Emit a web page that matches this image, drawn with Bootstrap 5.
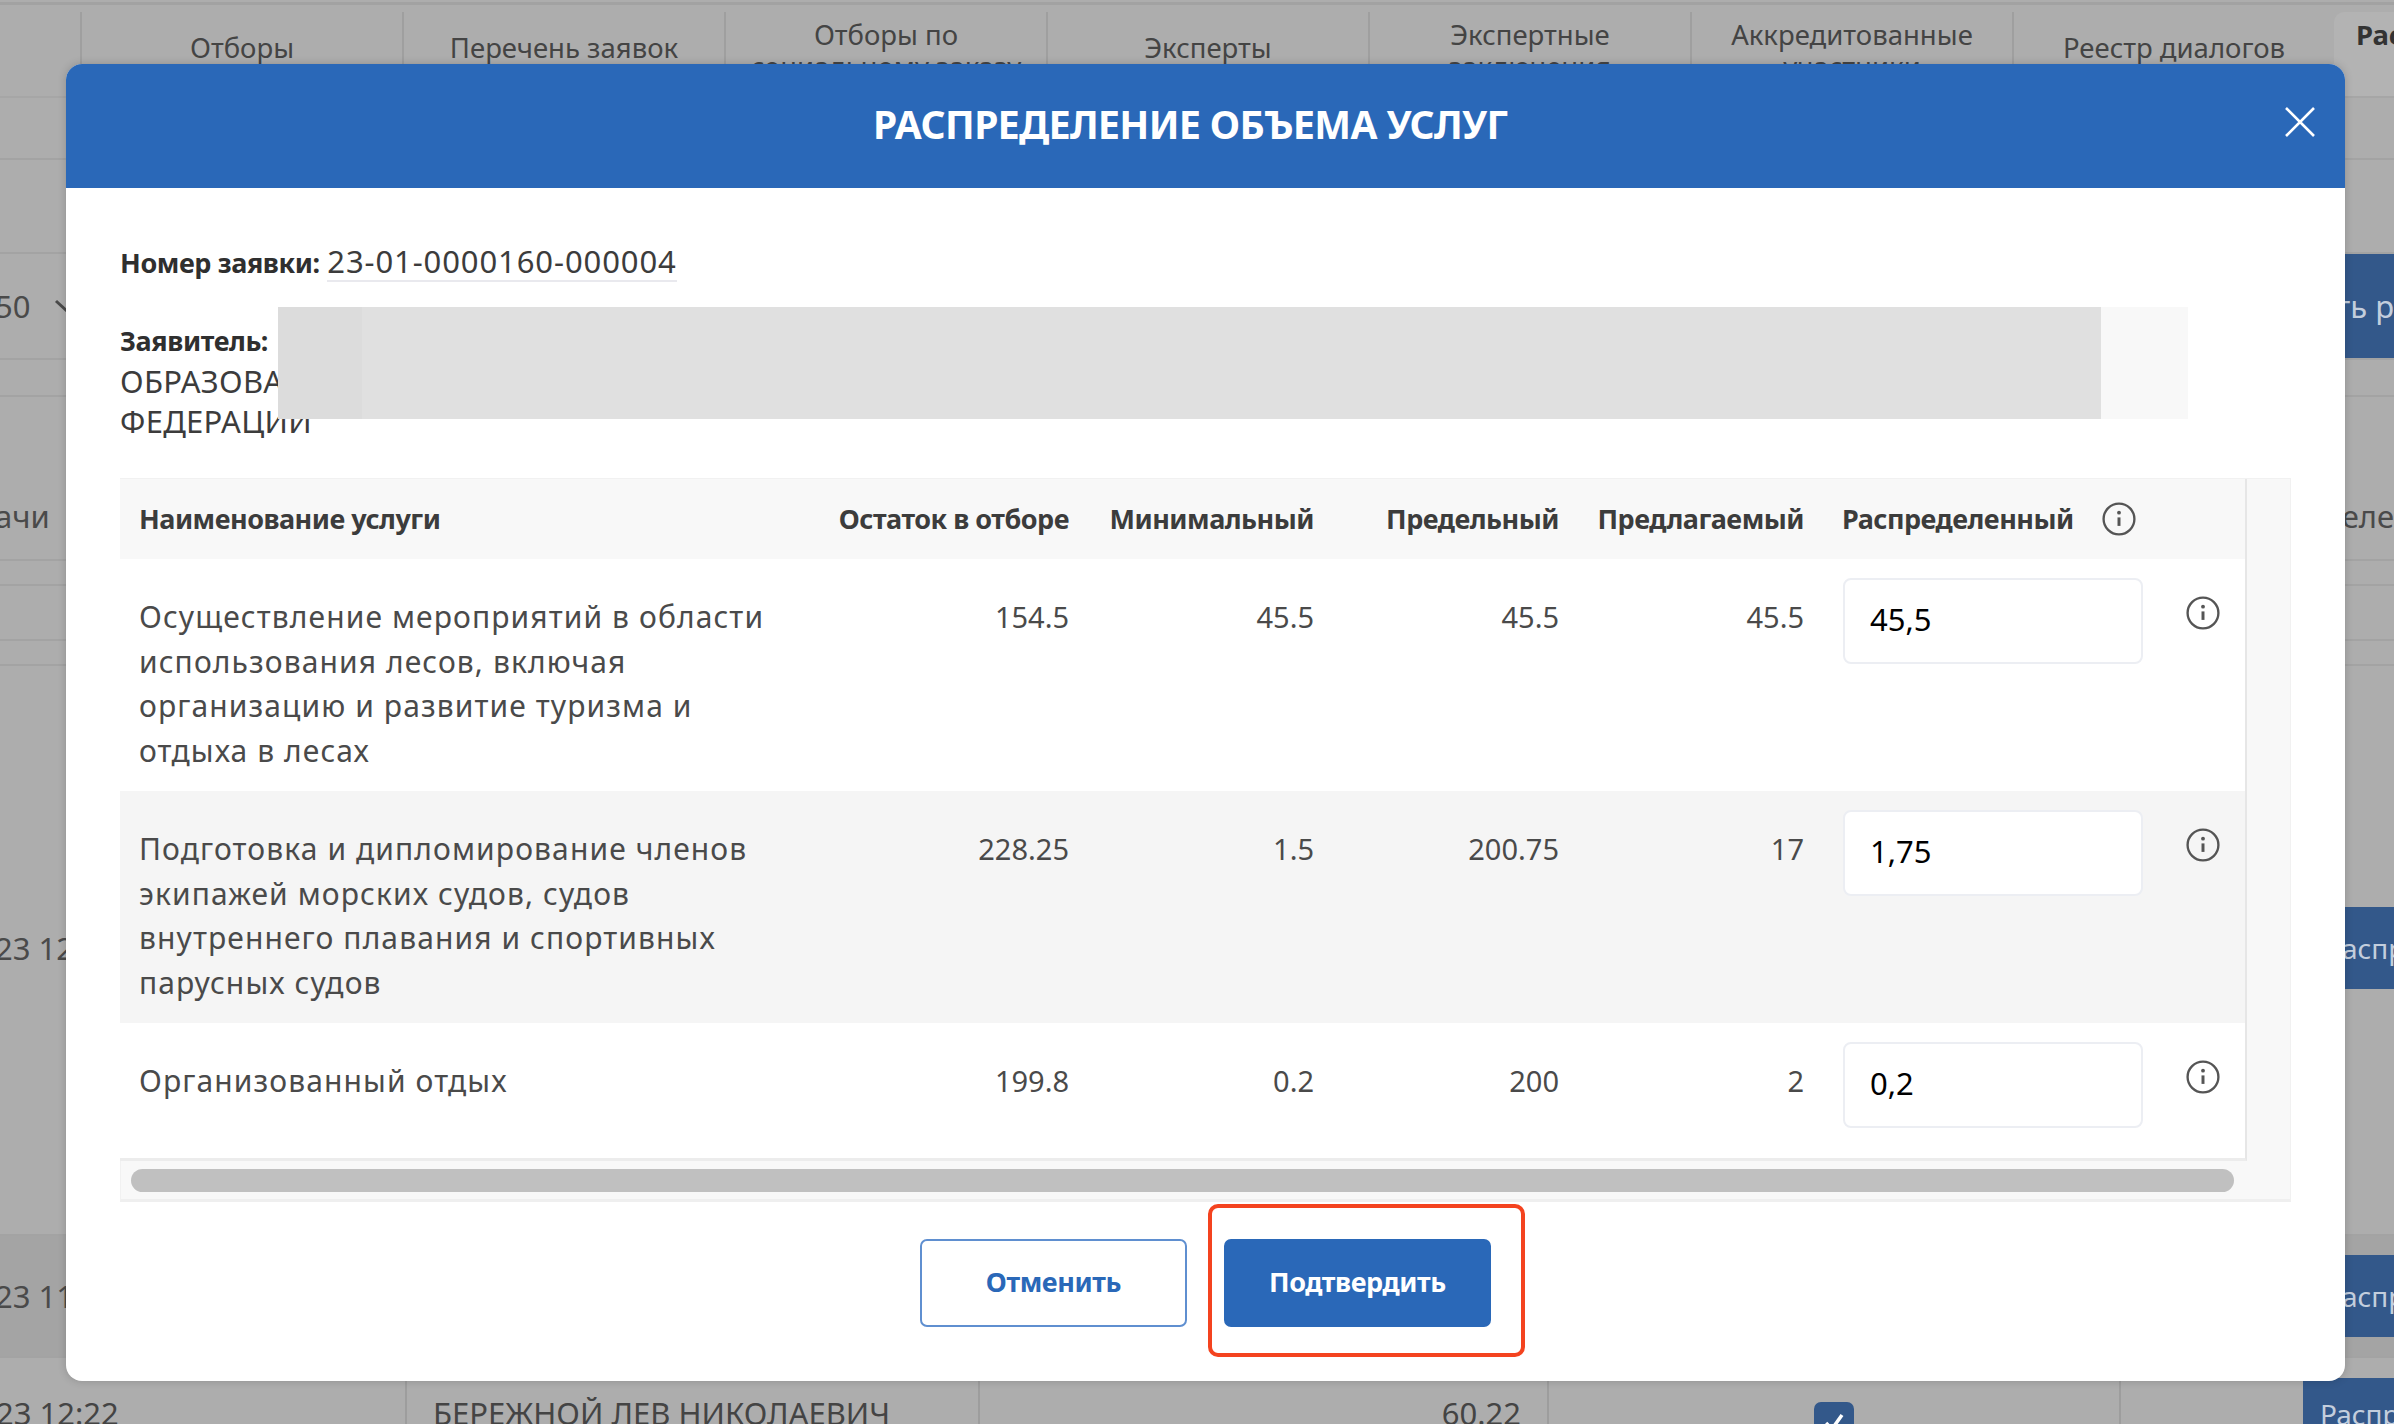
<!doctype html>
<html lang="ru">
<head>
<meta charset="utf-8">
<title>Распределение объема услуг</title>
<link href="https://cdn.jsdelivr.net/npm/bootstrap@5.3.0/dist/css/bootstrap.min.css" rel="stylesheet">
<style>
html,body{margin:0;height:1424px;overflow:hidden}
body{background:#adadad;color:#444;font-family:"Noto Sans",sans-serif;font-size:29px;line-height:44.8px}
.stage{position:relative;width:2394px;height:1424px;overflow:hidden}
.topline{height:5px;border-bottom:3px solid #a2a2a2}
.tabs-bar{height:93px;padding:7px 0 0 80px;border-bottom:2px solid #a6a6a6}
.tab-cell{width:322px;height:84px;border-left:2px solid #9f9f9f;font-size:27.5px;line-height:32px;color:#444;overflow:hidden;padding:0 10px;text-align:center}
.tab-cell.one{padding-top:20px}
.tab-cell.two{padding-top:7px}
.tab-live{flex:1;height:84px;background:#b3b3b3;border-radius:10px 0 0 0;padding:7px 0 0 22px;font-size:27.5px;font-weight:700;line-height:32px;color:#333;overflow:hidden;white-space:nowrap}
.strip{border-bottom:2px solid #a3a3a3;font-size:31px;color:#4a4a4a;overflow:hidden;white-space:nowrap}
.h62{height:62px}.h94{height:94px}.h106{height:106px}.h37{height:37px}.h164{height:164px;padding-bottom:20px}.h25{height:25px}.h55{height:55px}.h570{height:570px;padding-bottom:4px}.h122{height:122px;background:#a4a4a4}
.pull-left{margin-left:-5px}
.peek-btn{background:#33588a;color:#c3cedd;padding-left:20px;text-align:left}
.peek-tall{width:78px;align-self:stretch;display:flex;align-items:center;padding-left:0;justify-content:flex-end;padding-right:0}
.peek-mid{width:90px;height:82px;display:flex;align-items:center;justify-content:flex-start;padding-left:38px;overflow:hidden;font-size:28px}
.foot-row{height:76px;overflow:hidden;color:#444;font-size:31px;line-height:44px}
.fc{height:76px;padding-top:33px;white-space:nowrap;overflow:hidden}
.fc1{width:409px;margin-left:-4px}
.fc2{width:573px;border-left:2px solid #9d9d9d;padding-left:26px}
.fc3{width:569px;border-left:2px solid #9d9d9d;text-align:right;padding-right:26px}
.fc4{width:572px;border-left:2px solid #9d9d9d;padding-top:44px}
.fc5{width:184px;border-left:2px solid #9d9d9d}
.tick{width:40px;height:40px;margin:0 auto;background:#33588a;border-radius:7px;display:flex;align-items:center;justify-content:center}
.foot-btn{flex:1;height:76px;margin-top:20px;background:#33588a;color:#c3cedd;padding:14px 0 0 17px;font-size:28px;white-space:nowrap;overflow:hidden}
.sheet{position:absolute;left:66px;top:64px;width:2279px;height:1317px;border:0;border-radius:16px;background:#fff;box-shadow:0 0 8px rgba(0,0,0,.18);overflow:hidden}
.sheet-head{height:124px;background:#2a68b8;color:#fff;border:0;border-radius:0;padding:0 30px 4px 0;position:relative;justify-content:center}
.sheet-title{font-size:39px;font-weight:700;line-height:44px;color:#fff;margin:0;letter-spacing:-.6px}
.x-btn{position:absolute;left:2219px;top:43px;width:30px;height:30px;padding:0;background:transparent;border:0;line-height:0}
.sheet-body{padding:52px 55px 0 54px;flex:0 0 auto;color:#333}
.num-line{height:44px;margin-bottom:37px;white-space:nowrap}
.num-val{display:inline-block;line-height:38px;border-bottom:2px solid #e9e9ee;color:#3c3c3c;font-size:31px;letter-spacing:.9px}
.b-label{font-weight:700;font-size:27px;color:#2f2f2f;letter-spacing:-.4px}
.appl{position:relative;line-height:40px;height:120px;margin-bottom:37px;color:#3c3c3c;font-size:31px;letter-spacing:.3px}
.veil{position:absolute;left:158px;top:-14px;width:1910px;height:112px;background:#f8f8f8;display:flex}
.veil-a{width:84px;background:#dcdcdc}
.veil-b{width:1739px;background:#e0e0e0}
.tbl-shell{width:2171px;height:724px;background:#f8f8f8;border:1px solid #f1f1f1;border-bottom:3px solid #efefef}
.tbl-pane{width:2127px;height:682px;background:#fff;border-right:2px solid #e6e6e6;border-bottom:3px solid #ececec;margin-left:-1px}
.svc{table-layout:fixed;width:2125px;margin:0;--bs-table-bg:transparent;--bs-table-color:#4a4a4a;font-size:29px;line-height:44.5px}
.svc>*>tr>*{border:0;padding:0 19px;box-shadow:none}
.svc th{height:80px;background:#f8f8f8;font-weight:700;font-size:27px;color:#3c3c3c;vertical-align:middle;letter-spacing:-.5px;white-space:nowrap}
.svc td{vertical-align:top;padding-top:36px;padding-bottom:18px}
.svc td.svc-name{font-size:30px;letter-spacing:1.1px}
.svc tr.zebra td{background:#f5f5f5}
.svc td.val-cell{padding:19px 19px 18px 20px}
.svc td.tip-cell{padding:29px 0 0 24px}
.svc tr.last td.val-cell{padding-bottom:30px}
.amount{height:86px;width:300px;border:2px solid #eceef3;border-radius:8px;background:#fff;color:#000;font-size:31px;padding:0 25px 4px;box-shadow:none}
.bar-track{height:38px;padding:8px 56px 0 10px}
.bar-thumb{height:23px;background:#c0c0c0;border-radius:12px}
.sheet-foot{border:0;padding:37px 0 0;justify-content:center;gap:37px;flex-wrap:nowrap;position:relative}
.sheet-foot>*{margin:0}
.act{width:267px;height:88px;border-radius:7px;font-size:27px;font-weight:700;letter-spacing:-.4px;padding:0 0 2px}
.act-ghost{background:#fff;border:2px solid #5f8fd0;color:#2a68b8}
.act-main{background:#2a68b8;border:2px solid #2a68b8;color:#fff}
.callout{position:absolute;left:1142px;top:1140px;width:317px;height:153px;border:4px solid #f4431f;border-radius:10px;pointer-events:none}
</style>
</head>
<body>
<div class="stage">
  <div class="topline"></div>
  <div class="tabs-bar d-flex">
    <div class="tab-cell one">Отборы</div>
    <div class="tab-cell one">Перечень заявок</div>
    <div class="tab-cell two">Отборы по социальному заказу</div>
    <div class="tab-cell one">Эксперты</div>
    <div class="tab-cell two">Экспертные заключения</div>
    <div class="tab-cell two">Аккредитованные участники</div>
    <div class="tab-cell one">Реестр диалогов</div>
    <div class="tab-live">Рас</div>
  </div>
  <div class="strip h62"></div>
  <div class="strip h94"></div>
  <div class="strip h106 d-flex justify-content-between align-items-center">
    <span class="pull-left d-flex align-items-center gap-4">50 <svg width="26" height="14" viewBox="0 0 26 14" fill="none" stroke="#4a4a4a" stroke-width="3"><path d="M2 2l11 10L24 2"/></svg></span>
    <div class="peek-btn peek-tall">ть р</div>
  </div>
  <div class="strip h37"></div>
  <div class="strip h164 d-flex justify-content-between align-items-end">
    <span class="pull-left">ачи</span><span>целе</span>
  </div>
  <div class="strip h25"></div>
  <div class="strip h55"></div>
  <div class="strip h25"></div>
  <div class="strip h570 d-flex justify-content-between align-items-center">
    <span class="pull-left">23 12</span>
    <div class="peek-btn peek-mid">аспре</div>
  </div>
  <div class="strip h122 d-flex justify-content-between align-items-center">
    <span class="pull-left">23 11</span>
    <div class="peek-btn peek-mid">аспре</div>
  </div>
  <div class="foot-row d-flex">
    <div class="fc fc1">23 12:22</div>
    <div class="fc fc2">БЕРЕЖНОЙ ЛЕВ НИКОЛАЕВИЧ</div>
    <div class="fc fc3">60.22</div>
    <div class="fc fc4"><div class="tick"><svg width="26" height="26" viewBox="0 0 26 26" fill="none" stroke="#fff" stroke-width="3.5"><path d="M5 14l6 6L21 6"/></svg></div></div>
    <div class="fc fc5"></div>
    <div class="foot-btn">Распр</div>
  </div>

  <div class="modal-content sheet">
    <div class="modal-header sheet-head">
      <h5 class="modal-title sheet-title">РАСПРЕДЕЛЕНИЕ ОБЪЕМА УСЛУГ</h5>
      <button type="button" class="x-btn" aria-label="Закрыть"><svg width="30" height="30" viewBox="0 0 30 30" fill="none" stroke="#fff" stroke-width="2.6"><path d="M1 1l28 28M29 1L1 29"/></svg></button>
    </div>
    <div class="modal-body sheet-body">
      <div class="num-line"><span class="b-label">Номер заявки:</span> <span class="num-val">23-01-0000160-000004</span></div>
      <div class="appl">
        <div class="b-label">Заявитель:</div>
        <div>ОБРАЗОВА</div>
        <div>ФЕДЕРАЦИИ</div>
        <div class="veil"><div class="veil-a"></div><div class="veil-b"></div></div>
      </div>
      <div class="tbl-shell">
        <div class="tbl-pane">
          <table class="table svc">
            <thead>
              <tr>
                <th style="width:690px">Наименование услуги</th>
                <th style="width:278px" class="text-end">Остаток в отборе</th>
                <th style="width:245px" class="text-end">Минимальный</th>
                <th style="width:245px" class="text-end">Предельный</th>
                <th style="width:245px" class="text-end">Предлагаемый</th>
                <th style="width:339px"><div class="d-flex align-items-center gap-4">Распределенный <svg class="ms-1" width="34" height="34" viewBox="0 0 32 32" fill="none" stroke="#555" stroke-width="2.2"><circle cx="16" cy="16" r="14.5"/><path d="M16 14.5v8" stroke-width="2.8"/><circle cx="16" cy="10" r="1.8" fill="#555" stroke="none"/></svg></div></th>
                <th style="width:83px"></th>
              </tr>
            </thead>
            <tbody>
              <tr>
                <td class="svc-name">Осуществление мероприятий в области использования лесов, включая организацию и развитие туризма и отдыха в лесах</td>
                <td class="text-end">154.5</td><td class="text-end">45.5</td><td class="text-end">45.5</td><td class="text-end">45.5</td>
                <td class="val-cell"><input class="form-control amount" value="45,5"></td>
                <td class="tip-cell"><svg width="34" height="34" viewBox="0 0 32 32" fill="none" stroke="#555" stroke-width="2.2"><circle cx="16" cy="16" r="14.5"/><path d="M16 14.5v8" stroke-width="2.8"/><circle cx="16" cy="10" r="1.8" fill="#555" stroke="none"/></svg></td>
              </tr>
              <tr class="zebra">
                <td class="svc-name">Подготовка и дипломирование членов экипажей морских судов, судов внутреннего плавания и спортивных парусных судов</td>
                <td class="text-end">228.25</td><td class="text-end">1.5</td><td class="text-end">200.75</td><td class="text-end">17</td>
                <td class="val-cell"><input class="form-control amount" value="1,75"></td>
                <td class="tip-cell"><svg width="34" height="34" viewBox="0 0 32 32" fill="none" stroke="#555" stroke-width="2.2"><circle cx="16" cy="16" r="14.5"/><path d="M16 14.5v8" stroke-width="2.8"/><circle cx="16" cy="10" r="1.8" fill="#555" stroke="none"/></svg></td>
              </tr>
              <tr class="last">
                <td class="svc-name">Организованный отдых</td>
                <td class="text-end">199.8</td><td class="text-end">0.2</td><td class="text-end">200</td><td class="text-end">2</td>
                <td class="val-cell"><input class="form-control amount" value="0,2"></td>
                <td class="tip-cell"><svg width="34" height="34" viewBox="0 0 32 32" fill="none" stroke="#555" stroke-width="2.2"><circle cx="16" cy="16" r="14.5"/><path d="M16 14.5v8" stroke-width="2.8"/><circle cx="16" cy="10" r="1.8" fill="#555" stroke="none"/></svg></td>
              </tr>
            </tbody>
          </table>
        </div>
        <div class="bar-track"><div class="bar-thumb"></div></div>
      </div>
    </div>
    <div class="modal-footer sheet-foot">
      <button type="button" class="btn act act-ghost">Отменить</button>
      <button type="button" class="btn act act-main">Подтвердить</button>
    </div>
    <div class="callout"></div>
  </div>
</div>
<script src="https://cdn.jsdelivr.net/npm/bootstrap@5.3.0/dist/js/bootstrap.bundle.min.js"></script>
</body>
</html>
